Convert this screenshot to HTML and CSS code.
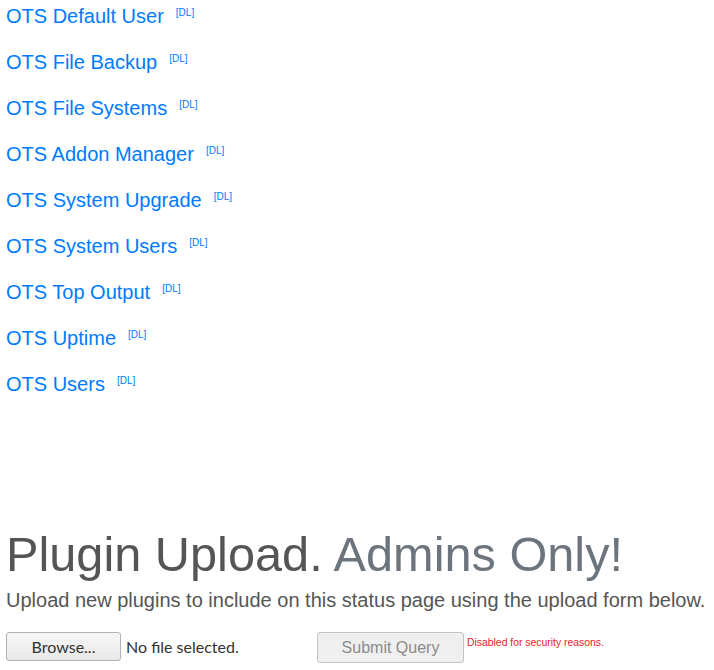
FILE: index.html
```html
<!DOCTYPE html>
<html>
<head>
<meta charset="utf-8">
<link rel="stylesheet" href="styles.css">
</head>
<body>
<ul class="plugins">
  <li><a class="plugin" href="#">OTS Default User</a><sup class="dl">[DL]</sup></li>
  <li><a class="plugin" href="#">OTS File Backup</a><sup class="dl">[DL]</sup></li>
  <li><a class="plugin" href="#">OTS File Systems</a><sup class="dl">[DL]</sup></li>
  <li><a class="plugin" href="#">OTS Addon Manager</a><sup class="dl">[DL]</sup></li>
  <li><a class="plugin" href="#">OTS System Upgrade</a><sup class="dl">[DL]</sup></li>
  <li><a class="plugin" href="#">OTS System Users</a><sup class="dl">[DL]</sup></li>
  <li><a class="plugin" href="#">OTS Top Output</a><sup class="dl">[DL]</sup></li>
  <li><a class="plugin" href="#">OTS Uptime</a><sup class="dl">[DL]</sup></li>
  <li><a class="plugin" href="#">OTS Users</a><sup class="dl">[DL]</sup></li>
</ul>
<section class="upload">
  <h1 class="title">Plugin Upload. <span class="muted">Admins Only!</span></h1>
  <p class="lead">Upload new plugins to include on this status page using the upload form below.</p>
  <form class="form">
    <div class="file">
      <span class="browse">Browse...</span>
      <span class="nofile">No file selected.</span>
    </div>
    <span class="submit">Submit Query</span>
    <span class="warn">Disabled for security reasons.</span>
  </form>
</section>
</body>
</html>
```
FILE: styles.css
```css
html, body {
  margin: 0;
  padding: 0;
  background: #fff;
}
body {
  font-family: "Liberation Sans", Arial, sans-serif;
  padding: 1px 6px 0;
}
.plugins {
  list-style: none;
  margin: 0;
  padding: 0;
}
.plugins li {
  font-size: 20px;
  line-height: 30px;
  height: 30px;
  margin-bottom: 16px;
  white-space: nowrap;
}
.plugin {
  color: #007bff;
  text-decoration: none;
}
.dl {
  color: #007bff;
  font-size: 10px;
  margin-left: 12px;
  vertical-align: top;
  line-height: 10px;
  position: relative;
  top: 7px;
}
.upload {
  margin-top: 126px;
}
.title {
  margin: 0;
  font-size: 48.7px;
  font-weight: normal;
  line-height: 58px;
  color: #555;
  white-space: nowrap;
}
.muted {
  color: #6c757d;
}
.lead {
  margin: 2px 0 0;
  font-size: 20px;
  line-height: 30px;
  color: #555;
  white-space: nowrap;
}
.form {
  display: flex;
  align-items: flex-start;
  margin-top: 17px;
}
.file {
  display: flex;
  align-items: center;
  width: 311px;
  font-family: Lato, "DejaVu Sans", sans-serif;
  font-size: 16px;
  color: #333;
}
.browse {
  box-sizing: border-box;
  width: 115px;
  height: 29px;
  line-height: 27px;
  text-align: center;
  border: 1px solid #b3b3b3;
  border-radius: 3px;
  background: linear-gradient(#f6f6f6, #e9e9e9);
  color: #2e3436;
}
.nofile {
  margin-left: 5px;
  color: #333;
}
.submit {
  box-sizing: border-box;
  width: 147px;
  height: 31px;
  line-height: 29px;
  text-align: center;
  border: 1px solid #c4c4c4;
  border-radius: 3px;
  background: #efefef;
  color: #8b8b8b;
  font-size: 16px;
}
.warn {
  margin-left: 3px;
  margin-top: 5px;
  font-size: 10.4px;
  color: #e5202b;
}
```
